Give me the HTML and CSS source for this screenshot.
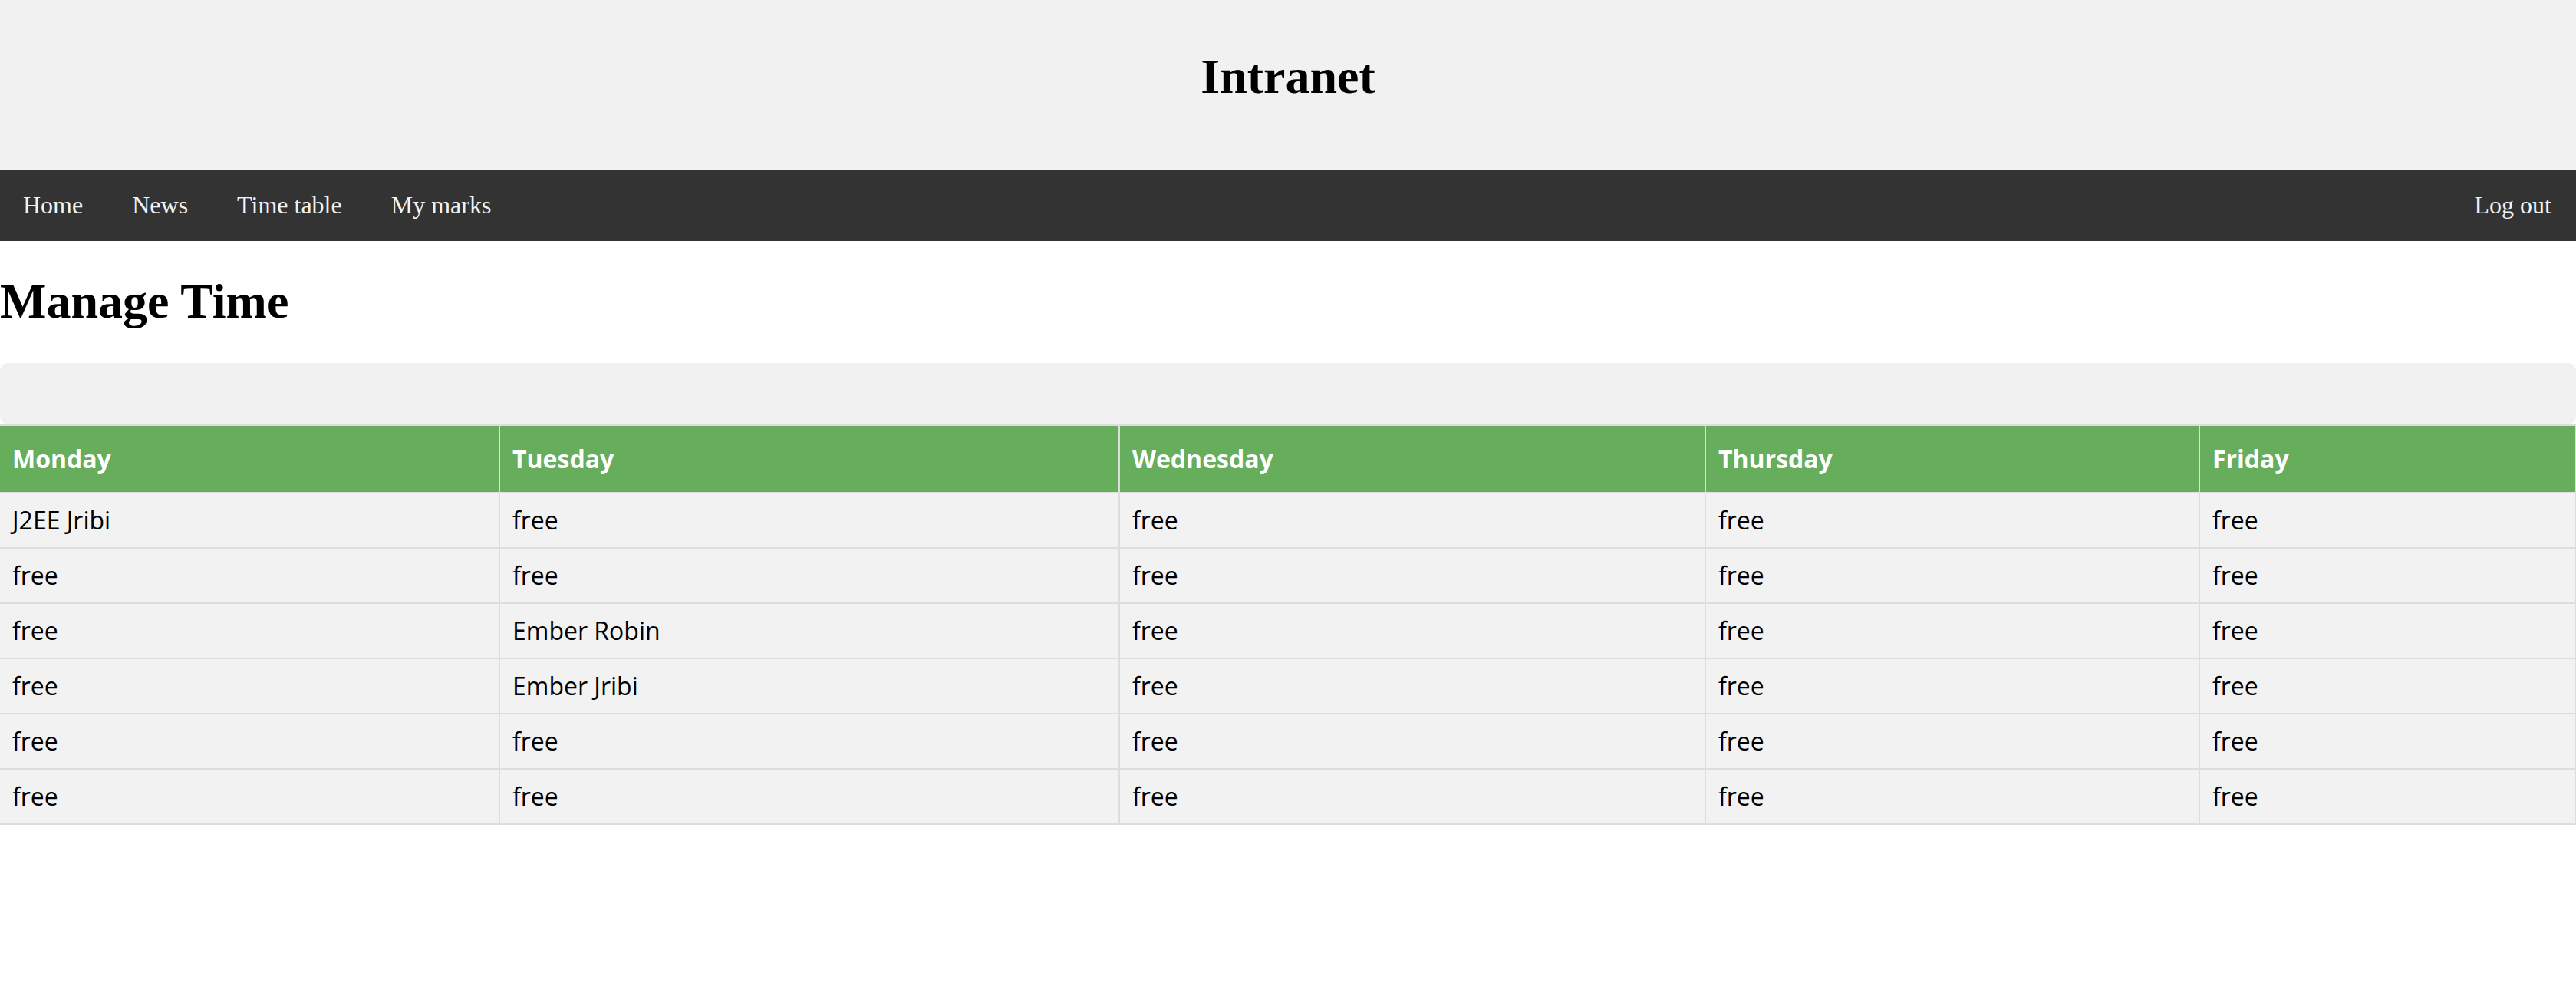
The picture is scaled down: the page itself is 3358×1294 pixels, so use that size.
FILE: index.html
```html
<!DOCTYPE html>
<html lang="en">
<head>
<meta charset="utf-8">
<title>Intranet</title>
<link rel="stylesheet" href="styles.css">
</head>
<body>
<header class="site-header">
  <h1 class="site-title">Intranet</h1>
</header>
<nav class="topnav">
  <a href="#" class="nav-link">Home</a>
  <a href="#" class="nav-link">News</a>
  <a href="#" class="nav-link">Time table</a>
  <a href="#" class="nav-link">My marks</a>
  <a href="#" class="nav-link nav-right">Log out</a>
</nav>
<h1 class="page-title">Manage Time</h1>
<div class="form-box"></div>
<table class="timetable">
  <colgroup>
    <col class="c1"><col class="c2"><col class="c3"><col class="c4"><col class="c5">
  </colgroup>
  <thead>
    <tr><th>Monday</th><th>Tuesday</th><th>Wednesday</th><th>Thursday</th><th>Friday</th></tr>
  </thead>
  <tbody>
    <tr><td>J2EE Jribi</td><td>free</td><td>free</td><td>free</td><td>free</td></tr>
    <tr><td>free</td><td>free</td><td>free</td><td>free</td><td>free</td></tr>
    <tr><td>free</td><td>Ember Robin</td><td>free</td><td>free</td><td>free</td></tr>
    <tr><td>free</td><td>Ember Jribi</td><td>free</td><td>free</td><td>free</td></tr>
    <tr><td>free</td><td>free</td><td>free</td><td>free</td><td>free</td></tr>
    <tr><td>free</td><td>free</td><td>free</td><td>free</td><td>free</td></tr>
  </tbody>
</table>
</body>
</html>
```
FILE: styles.css
```css
html, body {
  margin: 0;
  padding: 0;
  background: #ffffff;
}

body {
  font-family: "Liberation Serif", "Times New Roman", serif;
  color: #000;
}

.site-header {
  background: #f1f1f1;
  padding: 63px 0 85px;
  text-align: center;
}

.site-title {
  margin: 0;
  font-size: 64px;
  font-weight: bold;
  line-height: 74px;
}

.topnav {
  display: flex;
  background: #333333;
}

.nav-link {
  display: block;
  color: #f2f2f2;
  text-decoration: none;
  font-size: 32px;
  line-height: 36px;
  padding: 27px 32px 29px;
}

.nav-link:first-child {
  padding-left: 30px;
}

.nav-right {
  margin-left: auto;
}

.page-title {
  font-size: 64px;
  font-weight: bold;
  margin: 42px 0 43px;
  line-height: 74px;
}

.form-box {
  background: #f1f1f1;
  border-radius: 10px;
  padding: 40px;
}

.timetable {
  width: 100%;
  table-layout: fixed;
  border-collapse: collapse;
  font-family: "Open Sans", "Noto Sans", sans-serif;
  font-size: 32px;
  line-height: 38px;
  background: #f2f2f2;
}

.c1 { width: 651px; }
.c2 { width: 808px; }
.c3 { width: 764px; }
.c4 { width: 644px; }
.c5 { width: 491px; }

.timetable th,
.timetable td {
  border: 2px solid #dddddd;
  padding: 16px;
  text-align: left;
  white-space: nowrap;
}

.timetable th:first-child,
.timetable td:first-child {
  border-left: none;
}

.timetable th {
  background: #66ad5c;
  color: #ffffff;
  font-weight: bold;
  padding-top: 24px;
  padding-bottom: 24px;
}

.timetable td {
  color: #000;
}
```
